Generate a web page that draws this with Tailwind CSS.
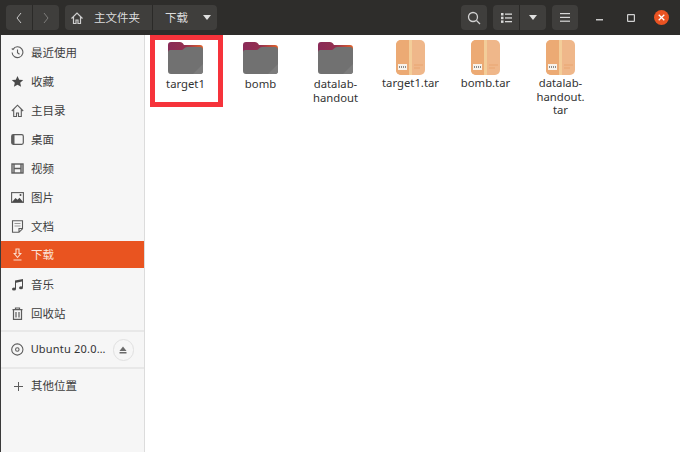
<!DOCTYPE html>
<html><head><meta charset="utf-8"><script src="https://cdn.jsdelivr.net/npm/@tailwindcss/browser@4"></script></head>
<body class="w-[680px] h-[452px] overflow-hidden bg-white font-['Noto_Sans','Noto_Sans_CJK_SC',sans-serif] text-[#3d3d3d]">
<svg class="absolute w-0 h-0"><defs>
<linearGradient id="tab" x1="0" x2="1" y1="0" y2="0"><stop offset="0" stop-color="#8a2a58"/><stop offset=".5" stop-color="#93304f"/><stop offset="1" stop-color="#e0622a"/></linearGradient>
<symbol id="folder" viewBox="0 0 35 32"><path d="M0 3a3 3 0 0 1 3-3h9q2 0 3 1.500l1 1.500h16a3 3 0 0 1 3 3v6H0z" fill="url(#tab)"/><path d="M0 10q0-2 2-2h11q2 0 3-1.500t3-1.500h13a3 3 0 0 1 3 3v21a3 3 0 0 1-3 3H3a3 3 0 0 1-3-3z" fill="#717171"/><path d="M35 22v7a3 3 0 0 1-3 3h-7z" fill="#7c7c7c"/></symbol>
<symbol id="box" viewBox="0 0 29 35"><rect width="29" height="35" rx="5" fill="#efb78a"/><path d="M5 0h9v35H5a5 5 0 0 1-5-5V5a5 5 0 0 1 5-5z" fill="#ecaa74"/><rect x="13" width="3" height="35" fill="#f3cd99"/><rect x="2" y="24" width="9" height="6" fill="#f8f2ea"/><path d="M3.500 26v2M5.500 26v2M7.500 26v2M9.500 26v2" stroke="#8a8a8a"/><rect x="18" y="24" width="9" height="2" fill="#ecae7d"/><rect x="18" y="27" width="6" height="2" fill="#ecae7d"/></symbol>
</defs></svg>
<header class="h-[35px] bg-[#2e2d2b] flex items-center pl-[6px] text-[#dcdcdc] text-[11.500px]">
 <div class="flex w-[53px] h-[25px] rounded-[4px] bg-[#3f3e3c] divide-x divide-[#2b2a28]">
  <div class="flex-1 flex items-center justify-center"><svg width="10" height="12" viewBox="0 0 10 12" fill="none" stroke="#c8c8c8"><path d="M7 1L3 6l4 5"/></svg></div>
  <div class="flex-1 flex items-center justify-center"><svg width="10" height="12" viewBox="0 0 10 12" fill="none" stroke="#7d7c7a"><path d="M3 1l4 5-4 5"/></svg></div>
 </div>
 <div class="ml-[6px] flex w-[152px] h-[25px] rounded-[4px] bg-[#3f3e3c] divide-x divide-[#2b2a28]">
  <div class="w-[88px] flex items-center pl-[6px] gap-[11px]"><svg width="12" height="12" viewBox="0 0 12 12" fill="none" stroke="#d0d0d0" stroke-width="1.200"><path d="M.5 6.500L6 1l5.500 5.500M2.500 5v6.500h2.500V8h2v3.500h2.500V5"/></svg><span>主文件夹</span></div>
  <div class="flex-1 flex items-center pl-[12px]"><span>下载</span><svg class="ml-[15px]" width="8" height="5" viewBox="0 0 8 5" fill="#e0e0e0"><path d="M0 0h8L4 5z"/></svg></div>
 </div>
 <div class="ml-[244px] w-[26px] h-[25px] rounded-[4px] bg-[#3f3e3c] flex items-center justify-center"><svg width="14" height="14" viewBox="0 0 14 14" fill="none" stroke="#d0d0d0" stroke-width="1.300"><circle cx="6" cy="6" r="4.500"/><path d="M9.500 9.500L13 13"/></svg></div>
 <div class="ml-[6px] flex w-[53px] h-[25px] rounded-[4px] bg-[#3f3e3c] divide-x divide-[#2b2a28]">
  <div class="flex-1 flex items-center justify-center"><svg width="11" height="10" viewBox="0 0 11 10" fill="#d8d8d8"><rect y="0" width="2.500" height="2.500"/><rect y="3.700" width="2.500" height="2.500"/><rect y="7.400" width="2.500" height="2.500"/><rect x="4" y=".5" width="7" height="1.300"/><rect x="4" y="4.300" width="7" height="1.300"/><rect x="4" y="8" width="7" height="1.300"/></svg></div>
  <div class="flex-1 flex items-center justify-center"><svg width="8" height="5" viewBox="0 0 8 5" fill="#e0e0e0"><path d="M0 0h8L4 5z"/></svg></div>
 </div>
 <div class="ml-[6px] w-[26px] h-[25px] rounded-[4px] bg-[#3f3e3c] flex items-center justify-center"><svg width="10" height="9" viewBox="0 0 10 9" fill="#d8d8d8"><rect width="10" height="1.200"/><rect y="3.800" width="10" height="1.200"/><rect y="7.600" width="10" height="1.200"/></svg></div>
 <svg class="ml-[18px] mt-[4px]" width="7" height="2" viewBox="0 0 7 2" fill="#c8c8c8"><rect width="7" height="1.500"/></svg>
 <svg class="ml-[24px]" width="8" height="8" viewBox="0 0 8 8" fill="none" stroke="#d0d0d0" stroke-width="1.200"><rect x=".6" y=".6" width="6.800" height="6.800" rx=".5"/></svg>
 <div class="ml-[19px] w-[15px] h-[15px] rounded-full bg-[#ea5322] flex items-center justify-center"><svg width="7" height="7" viewBox="0 0 7 7" stroke="#fff" stroke-width="1.300"><path d="M.7.7l5.600 5.600M6.300.7L.7 6.300"/></svg></div>
</header>
<div class="flex h-[417px]">
 <aside class="w-[145px] shrink-0 h-full bg-[#f6f6f6] border-r border-[#dcdcdc] border-l border-l-[#3a3a3a] text-[11.500px] pt-[3px] flex flex-col">
  <a class="h-[29px] flex items-center pl-[10px] gap-[7px]"><svg width="13" height="13" viewBox="0 0 13 13" fill="none" stroke="#5c5c5c" stroke-width="1.100"><path d="M2 3.200A5.400 5.400 0 1 1 1.100 6.500M.8 2.500L2 3.600 3.400 2.200M6.500 3.500v3.200l2 1.500"/></svg><span>最近使用</span></a>
  <a class="h-[29px] flex items-center pl-[10px] gap-[7px]"><svg width="13" height="13" viewBox="0 0 13 13" fill="#4a4a4a"><path d="M6.500 1l1.700 3.700 4 .4-3 2.700.9 4-3.600-2.100-3.600 2.100.9-4-3-2.700 4-.4z"/></svg><span>收藏</span></a>
  <a class="h-[29px] flex items-center pl-[10px] gap-[7px]"><svg width="13" height="13" viewBox="0 0 13 13" fill="none" stroke="#5c5c5c" stroke-width="1.100"><path d="M.8 7L6.500 1.200 12.200 7M2.700 5.500v7h2.800V9h2v3.500h2.800v-7"/></svg><span>主目录</span></a>
  <a class="h-[29px] flex items-center pl-[10px] gap-[7px]"><svg width="13" height="13" viewBox="0 0 13 13" fill="none" stroke="#5c5c5c" stroke-width="1.200"><rect x=".7" y="1.700" width="11.600" height="9.600" rx="1.500"/><rect x="1" y="2" width="2.500" height="9" fill="#5c5c5c" stroke="none"/></svg><span>桌面</span></a>
  <a class="h-[29px] flex items-center pl-[10px] gap-[7px]"><svg width="13" height="13" viewBox="0 0 13 13" fill="none" stroke="#5c5c5c" stroke-width="1.400"><rect x="1" y="2" width="11" height="9"/><path d="M3 2v9M10 2v9M3 6.500h7"/></svg><span>视频</span></a>
  <a class="h-[29px] flex items-center pl-[10px] gap-[7px]"><svg width="13" height="13" viewBox="0 0 13 13"><rect x=".6" y="1.600" width="11.800" height="9.800" fill="none" stroke="#5c5c5c" stroke-width="1.100"/><path d="M1 11l3.500-4 2 1.800 2-2L12 11z" fill="#4a4a4a"/><circle cx="9.500" cy="4" r="1" fill="#4a4a4a"/></svg><span>图片</span></a>
  <a class="h-[29px] flex items-center pl-[10px] gap-[7px]"><svg width="13" height="13" viewBox="0 0 13 13" fill="none" stroke="#5c5c5c" stroke-width="1.100"><path d="M1.500.8h10v8l-3.500 3.500H1.500zM11.500 8.500H8V12"/><path d="M3.500 3.500h6M3.500 6h6" stroke="#999"/></svg><span>文档</span></a>
  <a class="h-[27px] mb-[2px] flex items-center pl-[10px] gap-[7px] bg-[#e95420] text-[#fbe3d8]"><svg width="13" height="13" viewBox="0 0 13 13" fill="none" stroke="#fbdccd" stroke-width="1.100"><path d="M5 1h3v4.500h1.800L6.500 9.500 3.200 5.500H5zM2.500 12h8"/></svg><span>下载</span></a>
  <a class="h-[29px] flex items-center pl-[10px] gap-[7px]"><svg width="13" height="13" viewBox="0 0 13 13" fill="#4a4a4a"><path d="M4 2.500L12 1v8.500h-1V3.500L5 4.700v6.300H4z"/><ellipse cx="3" cy="11" rx="2" ry="1.500"/><ellipse cx="10" cy="9.800" rx="2" ry="1.500"/></svg><span>音乐</span></a>
  <a class="h-[29px] flex items-center pl-[10px] gap-[7px]"><svg width="13" height="13" viewBox="0 0 13 13" fill="none" stroke="#5c5c5c" stroke-width="1.200"><path d="M4.500 2.200V1h4v1.200M1.500 2.700h10M2.500 3v9.300h8V3M5 5v5.500M8 5v5.500"/></svg><span>回收站</span></a>
  <div class="h-[2px] bg-[#e8e8e8] mt-[2px]"></div>
  <div class="h-[35px] flex items-center pl-[10px] gap-[7px]"><svg width="13" height="13" viewBox="0 0 13 13" fill="none" stroke="#5c5c5c" stroke-width="1.100"><circle cx="6.500" cy="6.500" r="5.800"/><circle cx="6.500" cy="6.500" r="1.800"/></svg><span class="text-[#333] whitespace-nowrap text-[11px] tracking-[.2px]">Ubuntu 20.0…</span><span class="ml-auto mr-[10px] w-[22px] h-[22px] rounded-full border border-[#e0e0e0] flex items-center justify-center"><svg width="8" height="8" viewBox="0 0 8 8" fill="#6a6a6a"><path d="M4 .5L7.500 5h-7z"/><rect x=".5" y="6" width="7" height="1.500"/></svg></span></div>
  <div class="h-[2px] bg-[#e8e8e8]"></div>
  <a class="h-[34px] flex items-center pl-[12px] gap-[7px]"><svg width="11" height="11" viewBox="0 0 11 11" stroke="#5c5c5c"><path d="M5.500 1v9M1 5.500h9"/></svg><span>其他位置</span></a>
 </aside>
 <main class="relative flex-1 pl-[3px] pt-[7px] text-[11.300px] leading-[13.500px] text-center text-[#333]">
  <div class="grid grid-cols-[repeat(6,75px)]">
   <div class="flex flex-col items-center gap-[2px]"><svg width="35" height="32" class="mb-[1px]"><use href="#folder"/></svg><span>target1</span></div>
   <div class="flex flex-col items-center gap-[2px]"><svg width="35" height="32" class="mb-[1px]"><use href="#folder"/></svg><span>bomb</span></div>
   <div class="flex flex-col items-center gap-[2px]"><svg width="35" height="32" class="mb-[1px]"><use href="#folder"/></svg><span>datalab-<br>handout</span></div>
   <div class="flex flex-col items-center -mt-[2px] gap-[1px]"><svg width="29" height="35"><use href="#box"/></svg><span>target1.tar</span></div>
   <div class="flex flex-col items-center -mt-[2px] gap-[1px]"><svg width="29" height="35"><use href="#box"/></svg><span>bomb.tar</span></div>
   <div class="flex flex-col items-center -mt-[2px] gap-[1px]"><svg width="29" height="35"><use href="#box"/></svg><span>datalab-<br>handout.<br>tar</span></div>
  </div>
  <div class="absolute left-[5px] top-0 w-[73px] h-[72px] border-[5px] border-[#f6333b]"></div>
 </main>
</div>
</body></html>
